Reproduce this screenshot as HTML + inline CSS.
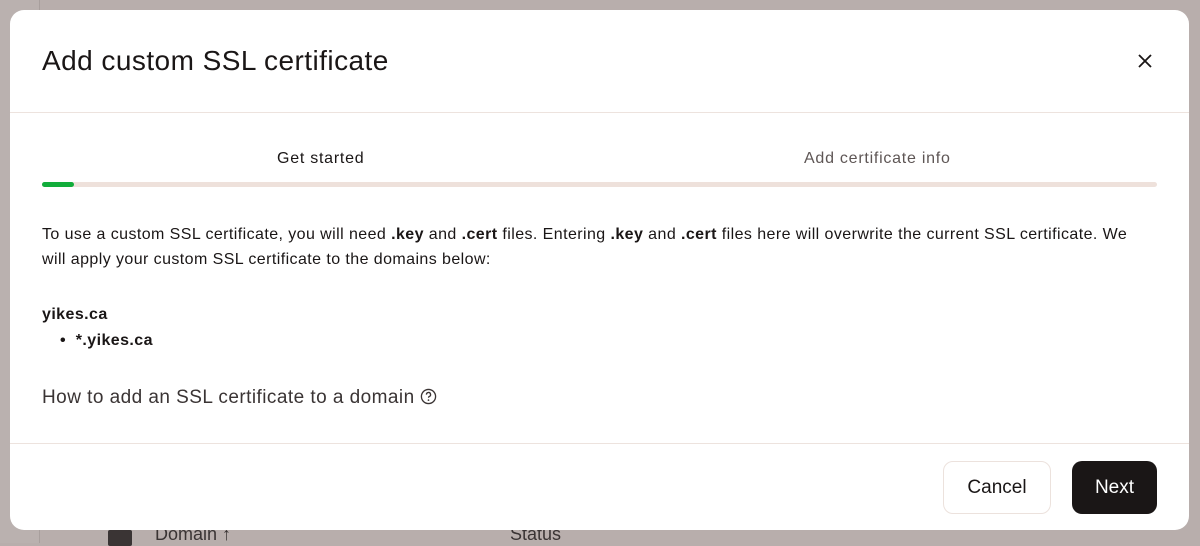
<!DOCTYPE html>
<html><head><meta charset="utf-8"><style>
*{box-sizing:border-box;margin:0;padding:0}
body{width:1200px;height:543px;background:#b8aeac;font-family:"Liberation Sans",sans-serif;color:#1a1616;position:relative;overflow:hidden}
.bg1{position:absolute;left:0;top:0;width:40px;height:543px;background:#bab1af;border-right:1px solid #a89f9d}
.bgtext{position:absolute;top:524px;font-size:18px;color:#3a3434}
.modal{position:absolute;left:10px;top:10px;width:1179px;height:520px;background:#fff;border-radius:14px;overflow:hidden}
h1{position:absolute;left:32px;top:35px;font-size:28px;font-weight:400;letter-spacing:0.45px}
.x{position:absolute;left:1126px;top:42px;width:18px;height:18px}
.hr{position:absolute;left:0;width:1179px;height:1px;background:#ede3de}
.tab{position:absolute;top:140px;font-size:16px;letter-spacing:0.75px}
.bar{position:absolute;left:32px;top:172px;width:1115px;height:5px;border-radius:3px;background:#eee1db}
.bar i{position:absolute;left:0;top:0;width:32px;height:5px;border-radius:3px;background:#12ad3b}
.p{position:absolute;left:32px;top:212px;width:1120px;font-size:16px;line-height:25px;letter-spacing:0.42px}
.btn{position:absolute;top:451px;height:53px;border-radius:10px;font-size:19px;display:flex;align-items:center;justify-content:center}
</style></head><body>
<div class="bg1"></div>
<div class="bgtext" style="left:108px;width:24px;height:16px;top:530px;background:#3a3434;border-radius:2px"></div>
<div class="bgtext" style="left:155px">Domain ↑</div>
<div class="bgtext" style="left:510px">Status</div>
<div class="modal">
<h1>Add custom SSL certificate</h1>
<svg class="x" viewBox="0 0 18 18"><path d="M3 3L15 15M15 3L3 15" stroke="#1a1616" stroke-width="1.8" fill="none"/></svg>
<div class="hr" style="top:102px"></div>
<div class="tab" style="left:267px">Get started</div>
<div class="tab" style="left:794px;color:#5e5655">Add certificate info</div>
<div class="bar"><i></i></div>
<div class="p">To use a custom SSL certificate, you will need <b>.key</b> and <b>.cert</b> files. Entering <b>.key</b> and <b>.cert</b> files here will overwrite the current SSL certificate. We<br>will apply your custom SSL certificate to the domains below:</div>
<div class="p" style="top:292px"><b>yikes.ca</b></div>
<div class="p" style="top:318px;left:50px"><b>•&nbsp; *.yikes.ca</b></div>
<div class="p" style="top:375px;font-size:19px;color:#3a3434;letter-spacing:0.45px">How to add an SSL certificate to a domain <svg width="17" height="17" viewBox="0 0 18 18" style="vertical-align:-2px"><circle cx="9" cy="9" r="7.5" fill="none" stroke="#3a3434" stroke-width="1.4"/><path d="M6.8 7a2.2 2.2 0 1 1 3 2c-.6.3-.8.7-.8 1.3" fill="none" stroke="#3a3434" stroke-width="1.4"/><circle cx="9" cy="12.8" r=".9" fill="#3a3434"/></svg></div>
<div class="hr" style="top:433px"></div>
<div class="btn" style="left:933px;width:108px;border:1px solid #ece2dd">Cancel</div>
<div class="btn" style="left:1062px;width:85px;background:#1a1616;color:#fff">Next</div>
</div>
</body></html>
